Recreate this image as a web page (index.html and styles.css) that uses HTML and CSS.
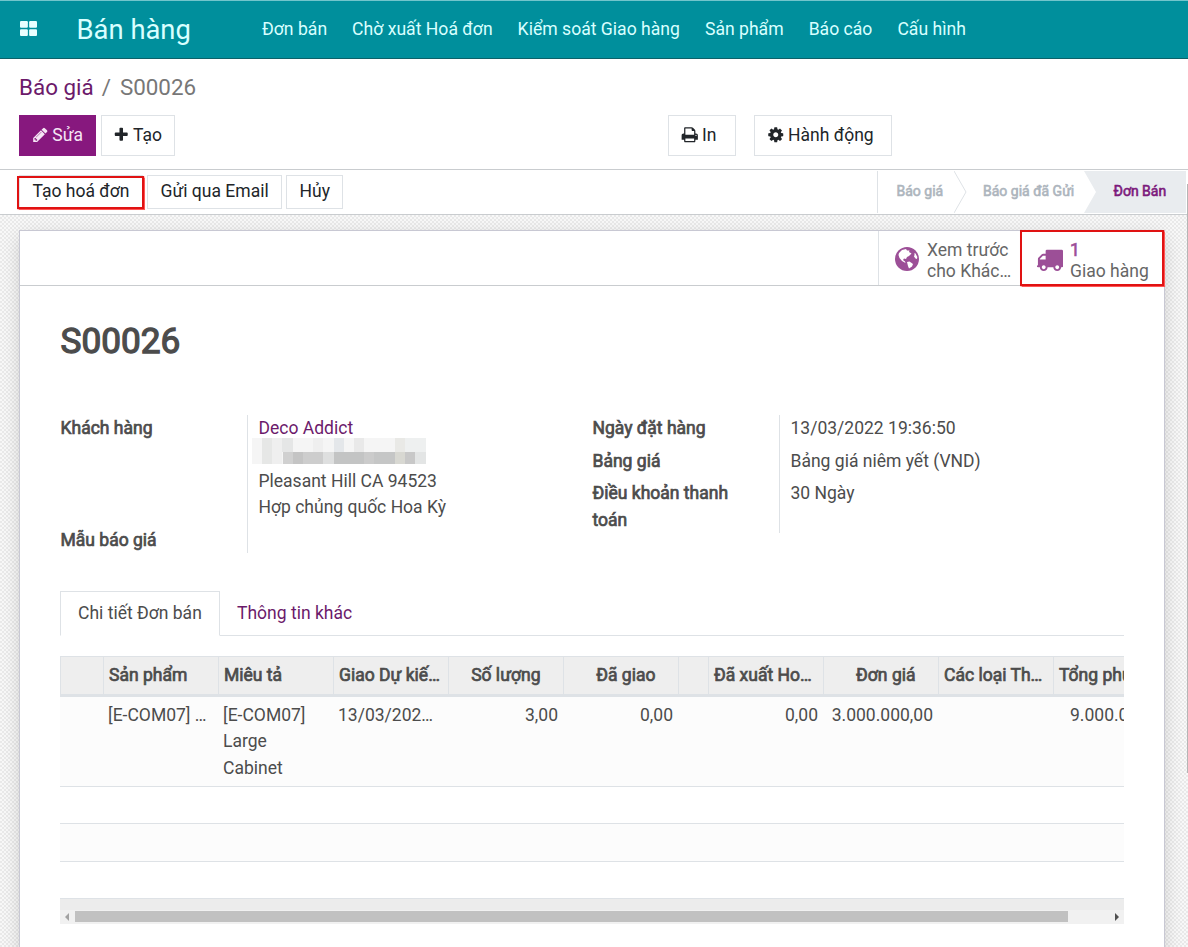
FILE: index.html
```
<!DOCTYPE html>
<html lang="vi">

<head>
    <meta charset="utf-8">
    <title>S00026 - Bán hàng</title>
    <meta name="viewport" content="width=device-width, initial-scale=1">
    <link rel="stylesheet" href="styles.css">
</head>

<body>
    <header class="navbar">
        <svg class="apps" viewBox="0 0 16 14">
            <rect width="7.4" height="6.4" rx="1" />
            <rect x="8.6" width="7.4" height="6.4" rx="1" />
            <rect y="7.6" width="7.4" height="6.4" rx="1" />
            <rect x="8.6" y="7.6" width="7.4" height="6.4" rx="1" />
        </svg>
        <div class="brand">Bán hàng</div>
        <nav class="menu">
            <span>Đơn bán</span>
            <span>Chờ xuất Hoá đơn</span>
            <span>Kiểm soát Giao hàng</span>
            <span>Sản phẩm</span>
            <span>Báo cáo</span>
            <span>Cấu hình</span>
        </nav>
    </header>

    <section class="control-panel">
        <div class="breadcrumb"><a>Báo giá</a><i>/</i><span>S00026</span></div>
        <div class="buttons">
            <button class="btn btn-primary btn-edit">
                <svg class="icon" viewBox="0 0 1792 1792"><path d="M491 1536l91-91-235-235-91 91v107h128v128h107zm523-928q0-22-22-22-10 0-17 7l-542 542q-7 7-7 17 0 22 22 22 10 0 17-7l542-542q7-7 7-17zm-54-192l416 416-832 832h-416v-416zm683 96q0 53-37 90l-166 166-416-416 166-165q36-38 90-38 53 0 91 38l235 234q37 39 37 91z" /></svg>
                Sửa
            </button>
            <button class="btn btn-create">
                <svg class="icon" viewBox="0 0 1792 1792"><path d="M1600 736v192q0 40-28 68t-68 28h-416v416q0 40-28 68t-68 28h-192q-40 0-68-28t-28-68v-416h-416q-40 0-68-28t-28-68v-192q0-40 28-68t68-28h416v-416q0-40 28-68t68-28h192q40 0 68 28t28 68v416h416q40 0 68 28t28 68z" /></svg>
                Tạo
            </button>
            <button class="btn btn-print">
                <svg class="icon" viewBox="0 0 1792 1792"><path d="M448 1536h896v-256h-896v256zm0-640h896v-384h-160q-40 0-68-28t-28-68v-160h-640v640zm1152 64q0-26-19-45t-45-19-45 19-19 45 19 45 45 19 45-19 19-45zm128 0v416q0 13-9.5 22.5t-22.5 9.5h-224v160q0 40-28 68t-68 28h-960q-40 0-68-28t-28-68v-160h-224q-13 0-22.5-9.5t-9.5-22.5v-416q0-79 56.5-135.5t135.5-56.5h64v-544q0-40 28-68t68-28h672q40 0 88 20t76 48l152 152q28 28 48 76t20 88v256h64q79 0 135.5 56.5t56.5 135.5z" /></svg>
                In
            </button>
            <button class="btn btn-action">
                <svg class="icon" viewBox="0 0 1792 1792"><path d="M1152 896q0-106-75-181t-181-75-181 75-75 181 75 181 181 75 181-75 75-181zm512-109v222q0 12-8 23t-20 13l-185 28q-19 54-39 91 35 50 107 138 10 12 10 25t-9 23q-27 37-99 108t-94 71q-12 0-26-9l-138-108q-44 23-91 38-16 136-29 186-7 28-36 28h-222q-14 0-24.5-8.5t-11.5-21.5l-28-184q-49-16-90-37l-141 107q-10 9-25 9-14 0-25-11-126-114-165-168-7-10-7-23 0-12 8-23 15-21 51-66.5t54-70.5q-27-50-41-99l-183-27q-13-2-21-12.5t-8-23.5v-222q0-12 8-23t19-13l186-28q14-46 39-92-40-57-107-138-10-12-10-24 0-10 9-23 26-36 98.5-107.5t94.5-71.5q13 0 26 10l138 107q44-23 91-38 16-136 29-186 7-28 36-28h222q14 0 24.5 8.5t11.5 21.5l28 184q49 16 90 37l142-107q9-9 24-9 13 0 25 10 129 119 165 170 7 8 7 22 0 12-8 23-15 21-51 66.5t-54 70.5q26 50 41 98l183 28q13 2 21 12.5t8 23.5z" /></svg>
                Hành động
            </button>
        </div>
    </section>

    <section class="statusbar">
        <div class="status-buttons">
            <button class="btn btn-invoice highlight">Tạo hoá đơn</button>
            <button class="btn btn-email">Gửi qua Email</button>
            <button class="btn btn-cancel">Hủy</button>
        </div>
        <div class="stages">
            <div class="stage stage-draft">Báo giá</div>
            <svg class="arrow" viewBox="0 0 14 42"><path d="M0 0L12 21L0 42" /></svg>
            <div class="stage stage-sent">Báo giá đã Gửi</div>
            <div class="stage stage-sale">Đơn Bán</div>
        </div>
    </section>

    <main class="content">
        <div class="sheet">
            <div class="button-box">
                <div class="stat stat-preview">
                    <svg class="stat-icon" viewBox="0 0 24 24">
                        <circle cx="12" cy="12" r="12" />
                        <path class="land" d="M4 6L7 3L11 2L12 3.500L14.500 3.500L14 5L16.500 6.500L14 9L12 10L11 12L9 11.500L8 13L10 14.500L10.500 16L7 14L4.500 11L3.500 8z" />
                        <path class="land" d="M12 15L14.500 14.500L18 17L17 19.500L14 21.500L13 19z" />
                        <path class="land" d="M19.500 6L20.500 6.500L22.300 10L22 12L20.500 11.500L19 9.500L19.500 8z" />
                    </svg>
                    <div class="stat-text">Xem trước<br>cho Khác…</div>
                </div>
                <div class="stat stat-delivery highlight">
                    <svg class="stat-icon" viewBox="0 0 1792 1792"><path d="M640 1408q0-52-38-90t-90-38-90 38-38 90 38 90 90 38 90-38 38-90zm-384-512h384v-256h-158q-13 0-22 9l-195 195q-9 9-9 22v30zm1280 512q0-52-38-90t-90-38-90 38-38 90 38 90 90 38 90-38 38-90zm256-1088v1024q0 15-4 26.500t-13.500 18.500-16.500 11.500-23.500 6-22.500 2-25.500 0-22.500-.500q0 106-75 181t-181 75-181-75-75-181h-384q0 106-75 181t-181 75-181-75-75-181h-64q-3 0-22.500.500t-25.500 0-22.500-2-23.500-6-16.500-11.500-13.500-18.500-4-26.500q0-26 19-45t45-19v-320q0-8-.500-35t0-38 2.500-34.500 6.500-37 14-30.500 22.500-30l198-198q19-19 50.500-32t58.500-13h160v-192q0-26 19-45t45-19h1024q26 0 45 19t19 45z" /></svg>
                    <div class="stat-text"><b>1</b><br>Giao hàng</div>
                </div>
            </div>

            <h1>S00026</h1>

            <div class="groups">
                <dl class="group group-left">
                    <dt>Khách hàng</dt>
                    <dd class="customer">
                        <a>Deco Addict</a>
                        <svg class="censored" viewBox="0 0 174 26" preserveAspectRatio="none">
                            <rect width="174" height="26" fill="#f5f5f5" />
                            <rect x="10" width="10" height="26" fill="#e6e7e6" />
                            <rect x="20" width="10" height="26" fill="#efefef" />
                            <rect x="30" width="11" height="14" fill="#e5e6e6" />
                            <rect x="61" width="10" height="14" fill="#efefef" />
                            <rect x="82" width="10" height="14" fill="#e4e7ea" />
                            <rect x="102" width="10" height="14" fill="#e9e9e9" />
                            <rect x="143" width="10" height="14" fill="#e9e9e6" />
                            <rect x="153" width="21" height="14" fill="#eef0f0" />
                            <rect x="31" y="14" width="10" height="12" fill="#d0d0d0" />
                            <rect x="41" y="14" width="10" height="12" fill="#c4c4c4" />
                            <rect x="51" y="14" width="20" height="12" fill="#cdcdcd" />
                            <rect x="71" y="14" width="11" height="12" fill="#dedfdf" />
                            <rect x="82" y="14" width="30" height="12" fill="#c3c4c4" />
                            <rect x="112" y="14" width="10" height="12" fill="#cbcbcb" />
                            <rect x="122" y="14" width="21" height="12" fill="#c5c6c6" />
                            <rect x="143" y="14" width="10" height="12" fill="#d8d8d2" />
                            <rect x="153" y="14" width="10" height="12" fill="#c8c8c8" />
                            <rect x="163" y="14" width="11" height="12" fill="#e3e5e5" />
                        </svg>
                        <span>Pleasant Hill CA 94523</span>
                        <span>Hợp chủng quốc Hoa Kỳ</span>
                    </dd>
                    <dt>Mẫu báo giá</dt>
                    <dd></dd>
                </dl>
                <dl class="group group-right">
                    <dt>Ngày đặt hàng</dt>
                    <dd>13/03/2022 19:36:50</dd>
                    <dt>Bảng giá</dt>
                    <dd>Bảng giá niêm yết (VND)</dd>
                    <dt>Điều khoản thanh toán</dt>
                    <dd>30 Ngày</dd>
                </dl>
            </div>

            <div class="tabs">
                <div class="tab active">Chi tiết Đơn bán</div>
                <div class="tab">Thông tin khác</div>
            </div>

            <div class="table-wrap">
                <table>
                    <colgroup>
                        <col class="handle">
                        <col span="5">
                        <col class="spacer">
                        <col span="4">
                    </colgroup>
                    <thead>
                        <tr>
                            <th></th>
                            <th>Sản phẩm</th>
                            <th>Miêu tả</th>
                            <th>Giao Dự kiế…</th>
                            <th class="num">Số lượng</th>
                            <th class="num">Đã giao</th>
                            <th></th>
                            <th>Đã xuất Ho…</th>
                            <th class="num">Đơn giá</th>
                            <th>Các loại Th…</th>
                            <th>Tổng phụ</th>
                        </tr>
                    </thead>
                    <tbody>
                        <tr class="line">
                            <td></td>
                            <td>[E-COM07] …</td>
                            <td class="desc">[E-COM07] Large Cabinet</td>
                            <td>13/03/202…</td>
                            <td class="num">3,00</td>
                            <td class="num">0,00</td>
                            <td></td>
                            <td class="num">0,00</td>
                            <td class="num">3.000.000,00</td>
                            <td></td>
                            <td class="total">9.000.0</td>
                        </tr>
                        <tr><td colspan="11"></td></tr>
                        <tr class="tall"><td colspan="11"></td></tr>
                        <tr><td colspan="11"></td></tr>
                    </tbody>
                </table>
                <div class="table-foot"></div>
                <div class="scrollbar">
                    <svg viewBox="0 0 4 8"><path d="M4 0v8L0 4z" /></svg>
                    <div class="thumb"></div>
                    <svg class="right" viewBox="0 0 4 8"><path d="M0 0v8L4 4z" /></svg>
                </div>
            </div>
        </div>
    </main>
    <div class="page-scroll"></div>
</body>

</html>
```
FILE: styles.css
```
* {
    box-sizing: border-box;
}

body {
    position: relative;
    display: flex;
    flex-direction: column;
    height: 947px;
    margin: 0;
    overflow: hidden;
    font-family: Roboto, "Liberation Sans", sans-serif;
    font-size: 17.52px;
    line-height: 26.25px;
    color: #4c4c4c;
    background-color: #fff;
}

a {
    color: #6c1a6b;
}

/* top menu */
.navbar {
    display: flex;
    flex: none;
    height: 59px;
    padding-left: 20px;
    border-top: 1px solid #71c5cc;
    border-bottom: 1px solid #0d6169;
    background-color: #008f9c;
    color: #d9ffff;
}

.apps {
    width: 17px;
    height: 15px;
    margin-top: 20px;
    fill: #e8ffff;
}

.brand {
    width: 185.5px;
    margin-left: 39.5px;
    font-size: 27.4px;
    line-height: 58px;
}

.menu {
    display: flex;
    gap: 25px;
    font-size: 17.6px;
    line-height: 57px;
    white-space: nowrap;
}

/* breadcrumb and main buttons */
.control-panel {
    flex: none;
    height: 111px;
    padding: 12px 19px 0;
    border-bottom: 1px solid #c9cccf;
}

.breadcrumb {
    height: 44px;
    font-size: 22.4px;
    line-height: 32px;
    color: #777;
}

.breadcrumb i {
    margin: 0 9px 0 8px;
    font-style: normal;
}

.buttons {
    display: flex;
}

.btn {
    display: flex;
    align-items: center;
    height: 41px;
    padding: 0 12px 1px;
    border: 1px solid #dee2e6;
    background-color: #fff;
    color: #212529;
    font: inherit;
    white-space: nowrap;
}

.icon {
    width: 17.5px;
    height: 17.5px;
    margin-right: 3.5px;
    fill: currentColor;
}

.btn-primary {
    border-color: #87187e;
    background-color: #87187e;
    color: #f5e6f5;
}

.btn-edit {
    width: 77px;
}

.btn-create {
    width: 74px;
    margin-left: 5px;
    padding-left: 11px;
}

.btn-print {
    width: 68px;
    margin-left: 493px;
}

.btn-action {
    width: 138px;
    margin-left: 18px;
}

/* status bar */
.statusbar {
    display: flex;
    flex: none;
    justify-content: space-between;
    height: 45px;
    padding-right: 2px;
    border-bottom: 1px solid #c9cccf;
}

.status-buttons {
    display: flex;
    gap: 4px;
    padding: 5px 0 0 19px;
}

.status-buttons .btn {
    height: 34px;
    padding: 0 12.5px 2px;
}

.btn-invoice {
    width: 124px;
}

.btn-email {
    width: 135px;
}

.btn-cancel {
    width: 57px;
}

.highlight {
    position: relative;
}

.highlight::after {
    position: absolute;
    content: "";
    border: 2.5px solid #e01212;
    box-shadow: 0 0 1px 0.5px #f55;
}

.btn-invoice::after {
    top: 0;
    right: -2px;
    bottom: -1px;
    left: -3px;
}

.stages {
    display: flex;
    height: 42px;
    margin-top: 1px;
    border-left: 1px solid #dee2e6;
    font-size: 14px;
    line-height: 40px;
    color: #adb5bd;
    -webkit-text-stroke: 0.6px;
    white-space: nowrap;
}

.stage-draft {
    width: 76px;
    padding-left: 18.5px;
}

.arrow {
    width: 14px;
    height: 42px;
    fill: none;
    stroke: #dee2e6;
}

.stage-sent {
    width: 116px;
    padding-left: 15px;
}

.stage-sale {
    width: 102px;
    padding-left: 29.5px;
    background-color: #e9ecef;
    clip-path: polygon(0 0, 100% 0, 100% 100%, 0 100%, 12px 50%);
    color: #7c1a7c;
}

/* sheet */
.content {
    flex: 1;
    min-height: 0;
    padding: 15px 0 0 19px;
    overflow: hidden;
    background: repeating-conic-gradient(#e9e9e9 0 25%, #f8f8f8 0 50%) 0 0 / 4px 4px;
}

.sheet {
    width: 1146px;
    height: 760px;
    border: 1px solid #c8c8d3;
    background-color: #fff;
    box-shadow: 0 5px 18px -3px rgba(0, 0, 0, 0.2);
}

.page-scroll {
    position: absolute;
    top: 184px;
    right: 0;
    width: 1px;
    height: 589px;
    background-color: #b5b5b5;
}

.button-box {
    display: flex;
    justify-content: flex-end;
    height: 55px;
    border-bottom: 1px solid #c9cccf;
}

.stat {
    display: flex;
    align-items: center;
    color: #666;
    line-height: 21px;
    white-space: nowrap;
}

.stat-icon {
    width: 24px;
    height: 24px;
    margin-bottom: 3px;
    fill: #9c4f97;
}

.land {
    fill: #fff;
}

.stat-preview {
    width: 143px;
    padding: 5px 0 0 15.5px;
    border-left: 1px solid #dee2e6;
}

.stat-preview .stat-text {
    margin-left: 8.5px;
}

.stat-delivery {
    width: 143px;
    padding: 5px 0 0 15px;
}

.stat-delivery .stat-icon {
    width: 27px;
    height: 27px;
    margin-right: 7px;
}

.stat-delivery::after {
    top: -1px;
    right: 0;
    bottom: -1px;
    left: -1px;
}

.stat b {
    color: #9c4f97;
    font-weight: 400;
    -webkit-text-stroke: 0.6px;
}

h1 {
    height: 53px;
    margin: 29px 0 47px 40.5px;
    font-size: 35.2px;
    font-weight: 400;
    line-height: 52px;
    -webkit-text-stroke: 1.3px;
}

/* fields */
.groups {
    display: flex;
    height: 138px;
    margin-left: 40px;
}

.group {
    display: grid;
    grid-template-columns: 187px 1fr;
    align-content: start;
    width: 532px;
    margin: 0;
}

.group-left {
    grid-template-rows: 112px 26px;
}

.group-right {
    grid-template-rows: 33px 32px 53px;
}

.group dt {
    width: 150px;
    padding-left: 0.5px;
    line-height: 26.5px;
    -webkit-text-stroke: 0.7px;
}

.group dd {
    margin: 0;
    padding-left: 10.5px;
    border-left: 1px solid #dee2e6;
}

.customer a,
.customer span {
    display: block;
}

.customer a {
    height: 23px;
}

.censored {
    display: block;
    width: 174px;
    height: 26px;
    margin: 0 0 4px -7px;
}

/* notebook */
.tabs {
    display: flex;
    height: 45px;
    margin: 38px 40px 20px;
    border-bottom: 1px solid #dee2e6;
}

.tab {
    height: 45px;
    padding: 9px 17px;
    color: #6c1a6b;
}

.tab.active {
    width: 160px;
    border: 1px solid #dee2e6;
    border-bottom-color: #fff;
    padding-top: 8px;
    color: #4c4c4c;
}

.table-wrap {
    width: 1064px;
    margin-left: 40px;
    overflow: hidden;
}

table {
    width: 1108px;
    table-layout: fixed;
    border-collapse: separate;
    border-spacing: 0;
}

col {
    width: 115px;
}

.handle {
    width: 43px;
}

.spacer {
    width: 30px;
}

th {
    height: 41px;
    padding: 0 5px 1px;
    border: 1px solid #dee2e6;
    border-width: 1px 0 3px 1px;
    background-color: #eee;
    font-weight: 400;
    text-align: left;
    white-space: nowrap;
    -webkit-text-stroke: 0.7px;
}

th.num {
    padding-right: 22.5px;
}

td {
    height: 37px;
    padding: 0 5px;
    border-bottom: 1px solid #dee2e6;
    vertical-align: top;
    white-space: nowrap;
}

.tall td {
    height: 38px;
}

tbody tr:nth-child(odd) td {
    background-color: #fcfcfc;
}

.line td {
    height: 90px;
    padding-top: 5px;
}

.line .desc {
    white-space: normal;
}

.line .total {
    padding-left: 17px;
}

.num {
    text-align: right;
}

.table-foot {
    height: 11px;
    background-color: #ececec;
}

.scrollbar {
    display: flex;
    align-items: center;
    height: 14px;
    padding: 0 5px 1px;
    background-color: #f1f1f1;
}

.scrollbar svg {
    width: 4px;
    height: 8px;
    fill: #a3a3a3;
}

.scrollbar .right {
    margin-left: auto;
    fill: #505050;
}

.thumb {
    width: 993px;
    height: 11px;
    margin-left: 6px;
    background-color: #c1c1c1;
}
```
